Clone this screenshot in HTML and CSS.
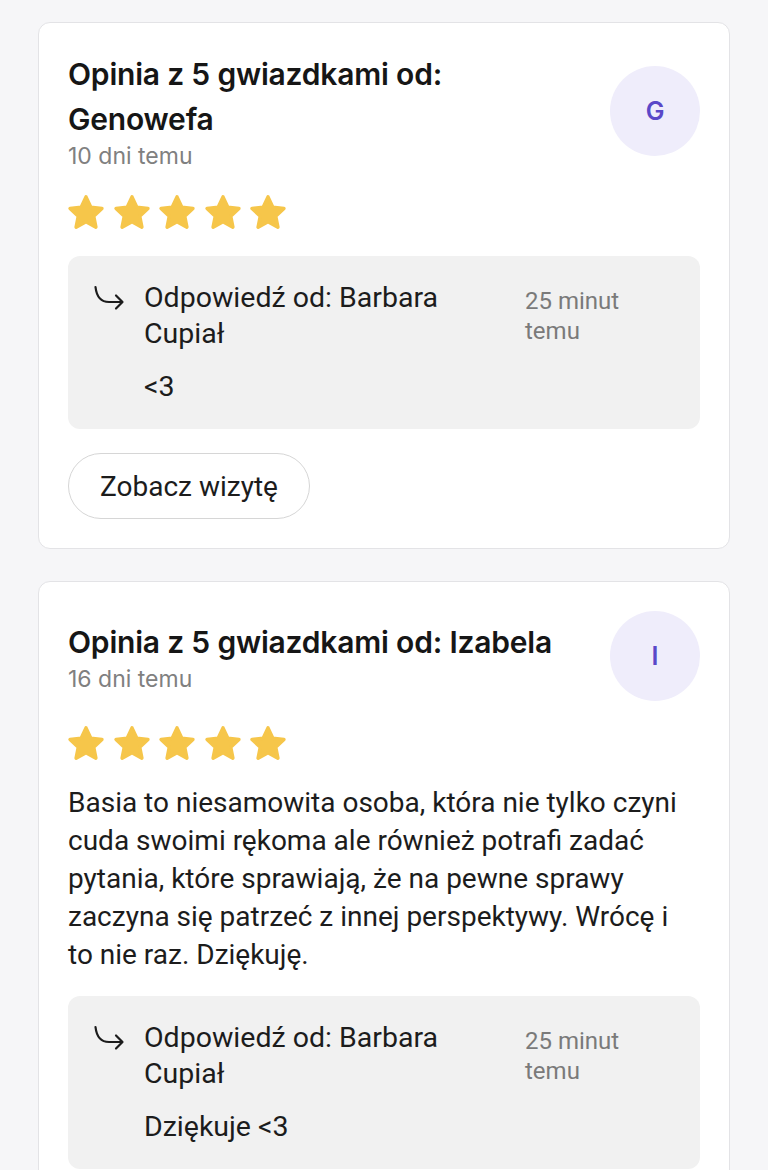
FILE: index.html
```html
<!DOCTYPE html>
<html lang="pl">
<head>
<meta charset="utf-8">
<link rel="stylesheet" href="styles.css">
</head>
<body>
<svg width="0" height="0" class="defs">
  <defs>
    <symbol id="star" viewBox="0 0 24 24">
      <path d="M12 2.8l2.75 5.9 6.35.75-4.7 4.35 1.25 6.3L12 16.95 6.35 20.1l1.25-6.3L2.9 9.45l6.35-.75z" fill="#f6c64a" stroke="#f6c64a" stroke-width="2" stroke-linejoin="round"/>
    </symbol>
    <symbol id="reply" viewBox="0 0 32 26">
      <path d="M2.5 2C3.5 11 8 17 16 17h13" fill="none" stroke="#1c1c1c" stroke-width="2.2" stroke-linecap="round"/>
      <path d="M23 10.5l6.5 6.5-6.5 6.5" fill="none" stroke="#1c1c1c" stroke-width="2.2" stroke-linecap="round" stroke-linejoin="round"/>
    </symbol>
  </defs>
</svg>
<main class="list">
  <article class="card">
    <header class="head">
      <div class="head-text">
        <h2 class="title">Opinia z 5 gwiazdkami od: Genowefa</h2>
        <div class="meta">10 dni temu</div>
      </div>
      <div class="avatar">G</div>
    </header>
    <div class="stars">
      <svg class="star"><use href="#star"/></svg>
      <svg class="star"><use href="#star"/></svg>
      <svg class="star"><use href="#star"/></svg>
      <svg class="star"><use href="#star"/></svg>
      <svg class="star"><use href="#star"/></svg>
    </div>
    <section class="reply">
      <svg class="reply-icon"><use href="#reply"/></svg>
      <div class="reply-body">
        <div class="reply-top">
          <div class="reply-name">Odpowiedź od: Barbara Cupiał</div>
          <div class="reply-time">25 minut temu</div>
        </div>
        <div class="reply-text">&lt;3</div>
      </div>
    </section>
    <div class="actions">
      <button class="btn">Zobacz wizytę</button>
    </div>
  </article>

  <article class="card">
    <header class="head">
      <div class="head-text">
        <h2 class="title">Opinia z 5 gwiazdkami od: Izabela</h2>
        <div class="meta">16 dni temu</div>
      </div>
      <div class="avatar">I</div>
    </header>
    <div class="stars">
      <svg class="star"><use href="#star"/></svg>
      <svg class="star"><use href="#star"/></svg>
      <svg class="star"><use href="#star"/></svg>
      <svg class="star"><use href="#star"/></svg>
      <svg class="star"><use href="#star"/></svg>
    </div>
    <p class="review">Basia to niesamowita osoba, która nie tylko czyni cuda swoimi rękoma ale również potrafi zadać pytania, które sprawiają, że na pewne sprawy zaczyna się patrzeć z innej perspektywy. Wrócę i to nie raz. Dziękuję.</p>
    <section class="reply">
      <svg class="reply-icon"><use href="#reply"/></svg>
      <div class="reply-body">
        <div class="reply-top">
          <div class="reply-name">Odpowiedź od: Barbara Cupiał</div>
          <div class="reply-time">25 minut temu</div>
        </div>
        <div class="reply-text">Dziękuje &lt;3</div>
      </div>
    </section>
  </article>
</main>
</body>
</html>
```
FILE: styles.css
```css
html, body {
  margin: 0;
  padding: 0;
}
body {
  background: #f6f6f8;
  font-family: Roboto, "Liberation Sans", sans-serif;
  color: #1c1c1c;
  height: 1170px;
  overflow: hidden;
}
.defs {
  position: absolute;
}
.list {
  display: flex;
  flex-direction: column;
  gap: 32px;
  padding: 22px 38px 0 38px;
}
.card {
  background: #fff;
  border: 1px solid #e3e3e6;
  border-radius: 12px;
  padding: 29px;
  display: flex;
  flex-direction: column;
  gap: 24px;
}
.head {
  display: flex;
  align-items: center;
  gap: 24px;
}
.head-text {
  flex: 1;
}
.title {
  margin: 0;
  font-family: Inter, "Noto Sans", sans-serif;
  font-weight: 600;
  font-size: 30px;
  line-height: 45px;
  letter-spacing: -0.2px;
  color: #161616;
  max-width: 505px;
}
.meta {
  font-family: Inter, "Noto Sans", sans-serif;
  font-size: 23px;
  line-height: 28px;
  color: #808080;
}
.avatar {
  width: 90px;
  height: 90px;
  flex: none;
  border-radius: 50%;
  background: #efedfb;
  color: #5a48c8;
  font-family: Inter, sans-serif;
  font-weight: 600;
  font-size: 25px;
  display: flex;
  align-items: center;
  justify-content: center;
}
.stars {
  display: flex;
  align-items: center;
  gap: 3.5px;
  height: 38px;
  margin-left: -3px;
}
.star {
  width: 42px;
  height: 42px;
  flex: none;
}
.review {
  margin: -3px 0 -2px 0;
  font-size: 28px;
  line-height: 38px;
  color: #1c1c1c;
}
.reply {
  background: #f1f1f1;
  border-radius: 12px;
  padding: 24px 25px;
  display: flex;
  gap: 19px;
}
.reply-icon {
  width: 32px;
  height: 26px;
  flex: none;
  margin-top: 5px;
}
.reply-body {
  flex: 1;
  display: flex;
  flex-direction: column;
  gap: 17px;
}
.reply-top {
  display: flex;
  gap: 24px;
}
.reply-name {
  flex: 1;
  font-size: 28.5px;
  line-height: 36px;
}
.reply-time {
  width: 130px;
  margin-right: 20px;
  flex: none;
  font-size: 24px;
  line-height: 30px;
  color: #7a7a7a;
  padding-top: 6px;
}
.reply-text {
  font-size: 28.5px;
  line-height: 36px;
}
.actions {
  display: flex;
}
.btn {
  font-family: Roboto, "Liberation Sans", sans-serif;
  font-size: 28px;
  color: #1c1c1c;
  background: #fff;
  border: 1.5px solid #d6d6d6;
  border-radius: 34px;
  height: 66px;
  padding: 0 31px;
}
```
